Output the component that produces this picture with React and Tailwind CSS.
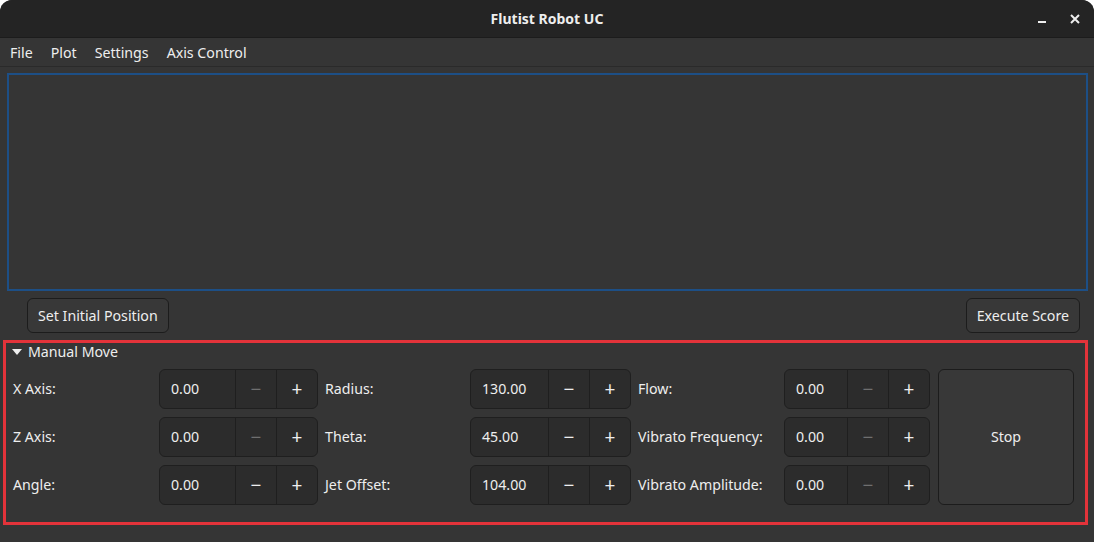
import React from "react";

const rows = [
  [
    { label: "X Axis:", value: "0.00", minusOff: true },
    { label: "Radius:", value: "130.00" },
    { label: "Flow:", value: "0.00", minusOff: true },
  ],
  [
    { label: "Z Axis:", value: "0.00", minusOff: true },
    { label: "Theta:", value: "45.00" },
    { label: "Vibrato Frequency:", value: "0.00", minusOff: true },
  ],
  [
    { label: "Angle:", value: "0.00" },
    { label: "Jet Offset:", value: "104.00" },
    { label: "Vibrato Amplitude:", value: "0.00", minusOff: true },
  ],
];

const widths = [
  { label: "w-[146px]", entry: "w-[75px]", spin: "w-[159px]" },
  { label: "w-[152px] pl-[7px]", entry: "w-[77px]", spin: "w-[161px]" },
  { label: "w-[153px] pl-[7px]", entry: "w-[62px]", spin: "w-[146px]" },
];

function Spin({ value, minusOff, w }) {
  return (
    <div className={`flex h-[40px] ${w.spin} rounded-[6px] border border-[#1f1f1f] bg-[#2c2c2c]`}>
      <div className={`${w.entry} flex items-center pl-[11px] text-[14.2px]`}>{value}</div>
      <div
        className={`flex w-[41px] items-center justify-center border-l border-[#1f1f1f] text-[19px] ${
          minusOff ? "text-[#6f6f6f]" : "text-[#eeeeee]"
        }`}
      >
        −
      </div>
      <div className="flex flex-1 items-center justify-center border-l border-[#1f1f1f] text-[19px]">+</div>
    </div>
  );
}

export default function App() {
  return (
    <div
      className="h-[542px] w-[1094px] overflow-hidden bg-[#353535] text-[#eeeeee] rounded-t-[12px]"
      style={{ fontFamily: "'Noto Sans', 'Open Sans', sans-serif" }}
    >
      <div className="relative flex h-[38px] items-center justify-center border-b border-[#1c1c1c] bg-[#242424]">
        <span className="text-[14px] font-bold">Flutist Robot UC</span>
        <div className="absolute right-[14px] top-0 flex h-full items-center gap-[24px]">
          <span className="mt-[6px] block h-[2px] w-[8px] bg-[#eeeeee]" />
          <svg width="10" height="10" viewBox="0 0 10 10" className="mt-[1px]">
            <path d="M1 1 L9 9 M9 1 L1 9" stroke="#eeeeee" strokeWidth="2" />
          </svg>
        </div>
      </div>

      <div className="flex h-[29px] items-center gap-[18px] border-b border-[#2a2a2a] pl-[10px] pt-[1px] text-[14.2px]">
        <span>File</span>
        <span>Plot</span>
        <span>Settings</span>
        <span>Axis Control</span>
      </div>

      <div className="ml-[7px] mt-[6px] h-[218px] w-[1081px] border-2 border-[#1d4f86]" />

      <div className="mt-[7px] flex justify-between pl-[27px] pr-[14px]">
        <button className="h-[35px] rounded-[6px] border border-[#1c1c1c] bg-[#383838] px-[10px] text-[14.2px]">
          Set Initial Position
        </button>
        <button className="h-[35px] rounded-[6px] border border-[#1c1c1c] bg-[#383838] px-[10px] text-[14.2px]">
          Execute Score
        </button>
      </div>

      <div className="ml-[3px] mt-[7px] h-[185px] w-[1085px] border-[3px] border-[#e3333a] pl-[7px]">
        <div className="flex h-[17px] items-center gap-[6px] text-[14.2px] -ml-[1px]">
          <svg width="10" height="6" viewBox="0 0 10 6">
            <path d="M0 0 L10 0 L5 6 Z" fill="#eeeeee" />
          </svg>
          <span>Manual Move</span>
        </div>
        <div className="mt-[9px] flex">
          <div className="flex flex-col gap-[8px]">
            {rows.map((r, i) => (
              <div key={i} className="flex items-center">
                {r.map((c, j) => (
                  <React.Fragment key={j}>
                    <div className={`${widths[j].label} text-[14.2px]`}>{c.label}</div>
                    <Spin value={c.value} minusOff={c.minusOff} w={widths[j]} />
                  </React.Fragment>
                ))}
              </div>
            ))}
          </div>
          <button className="ml-[8px] h-[136px] w-[136px] rounded-[6px] border border-[#1c1c1c] bg-[#383838] text-[14.2px]">
            Stop
          </button>
        </div>
      </div>
    </div>
  );
}
